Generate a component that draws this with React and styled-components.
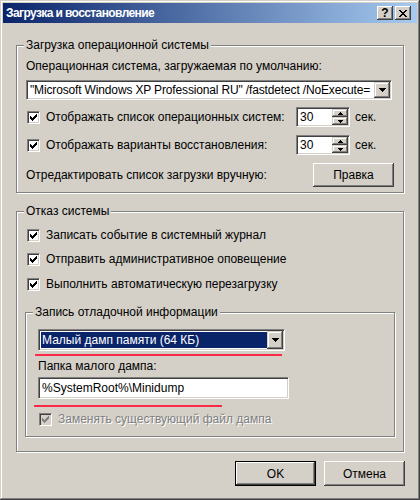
import styled, { createGlobalStyle } from 'styled-components';

const GlobalStyle = createGlobalStyle`
  html, body { margin: 0; padding: 0; background: #d4d0c8; }
  body {
    font-family: "Liberation Sans", Arial, sans-serif;
    font-size: 12px;
    color: #000;
  }
  * { box-sizing: border-box; }
`;

const Window = styled.div`
  width: 420px;
  height: 500px;
  padding: 3px;
  background: #d4d0c8;
  display: flex;
  flex-direction: column;
  box-shadow: inset -1px -1px 0 #404040, inset 1px 1px 0 #d4d0c8,
    inset -2px -2px 0 #808080, inset 2px 2px 0 #fff;
`;

const TitleBar = styled.div`
  height: 20px;
  flex: none;
  display: flex;
  align-items: center;
  justify-content: space-between;
  padding: 0 6px 0 3px;
  background: linear-gradient(to right, #0a246a, #a6caf0);
`;

const TitleText = styled.span`
  color: #fff;
  font-weight: bold;
  font-size: 12px;
  letter-spacing: -0.6px;
`;

const CaptionButtons = styled.div`
  display: flex;
  gap: 2px;
`;

const CaptionButton = styled.div`
  width: 16px;
  height: 14px;
  background: #d4d0c8;
  display: flex;
  align-items: center;
  justify-content: center;
  font-weight: bold;
  font-size: 12px;
  line-height: 1;
  box-shadow: inset -1px -1px 0 #404040, inset 1px 1px 0 #fff,
    inset -2px -2px 0 #808080, inset 2px 2px 0 #d4d0c8;
`;

const Body = styled.div`
  flex: 1;
  display: flex;
  flex-direction: column;
  padding: 22px 13px 0 13px;
`;

const Group = styled.div`
  position: relative;
  display: flex;
  flex-direction: column;
  border: 1px solid #808080;
  box-shadow: 1px 1px 0 #fff, inset 1px 1px 0 #fff;
  margin: ${(p) => p.$margin || '0'};
  padding: ${(p) => p.$pad};
`;

const Legend = styled.span`
  position: absolute;
  top: -8px;
  left: 7px;
  padding: 0 2px;
  line-height: 15px;
  background: #d4d0c8;
`;

const Label = styled.div`
  height: 16px;
  line-height: 16px;
  white-space: nowrap;
  margin-top: ${(p) => p.$mt || 0}px;
  color: ${(p) => (p.$disabled ? '#808080' : '#000')};
  text-shadow: ${(p) => (p.$disabled ? '1px 1px 0 #fff' : 'none')};
`;

const Sunken = styled.div`
  display: flex;
  align-items: stretch;
  height: ${(p) => p.$h || 20}px;
  width: ${(p) => (p.$w ? `${p.$w}px` : '100%')};
  margin-top: ${(p) => p.$mt || 0}px;
  background: #fff;
  border-top: 1px solid #808080;
  border-left: 1px solid #808080;
  border-right: 1px solid #fff;
  border-bottom: 1px solid #fff;
  box-shadow: inset 1px 1px 0 #404040, inset -1px -1px 0 #d4d0c8;
  padding: 2px;
`;

const FieldText = styled.div`
  flex: 1;
  min-width: 0;
  overflow: hidden;
  white-space: nowrap;
  line-height: ${(p) => p.$lh || 14}px;
  letter-spacing: ${(p) => p.$ls || 0}px;
  padding-left: 1px;
  background: ${(p) => (p.$selected ? '#0a246a' : 'transparent')};
  color: ${(p) => (p.$selected ? '#fff' : '#000')};
`;

const DropButton = styled.div`
  width: 16px;
  flex: none;
  margin: -1px -1px -1px 0;
  background: #d4d0c8;
  display: flex;
  align-items: center;
  justify-content: center;
  box-shadow: inset -1px -1px 0 #404040, inset 1px 1px 0 #d4d0c8,
    inset -2px -2px 0 #808080, inset 2px 2px 0 #fff;
`;

const SpinBox = styled.div`
  display: flex;
  flex-direction: column;
  width: 16px;
  flex: none;
  margin: -1px -1px -1px 0;
`;

const SpinHalf = styled.div`
  flex: 1;
  background: #d4d0c8;
  display: flex;
  align-items: center;
  justify-content: center;
  box-shadow: inset -1px -1px 0 #404040, inset 1px 1px 0 #d4d0c8,
    inset -2px -2px 0 #808080, inset 2px 2px 0 #fff;
`;

const CheckRow = styled.div`
  display: flex;
  align-items: center;
  min-width: 0;
  height: 16px;
  margin-top: ${(p) => p.$mt || 0}px;
  margin-left: ${(p) => p.$ml || 0}px;
`;

const Box = styled.span`
  width: 13px;
  height: 13px;
  flex: none;
  margin-right: 6px;
  display: flex;
  align-items: center;
  justify-content: center;
  background: ${(p) => (p.$disabled ? '#d4d0c8' : '#fff')};
  border-top: 1px solid #808080;
  border-left: 1px solid #808080;
  border-right: 1px solid #fff;
  border-bottom: 1px solid #fff;
  box-shadow: inset 1px 1px 0 #404040, inset -1px -1px 0 #d4d0c8;
`;

const TimeRow = styled.div`
  display: grid;
  grid-template-columns: minmax(0, 1fr) 54px 42px;
  align-items: center;
  margin-top: ${(p) => p.$mt || 0}px;
`;

const Unit = styled.span`
  padding-left: 5px;
`;

const EditRow = styled.div`
  display: flex;
  align-items: center;
  justify-content: space-between;
  margin-top: ${(p) => p.$mt || 0}px;
  margin-right: -2px;
`;

const Button = styled.div`
  width: 81px;
  height: ${(p) => p.$h || 24}px;
  display: flex;
  align-items: center;
  justify-content: center;
  background: #d4d0c8;
  border: ${(p) => (p.$default ? '1px solid #000' : 'none')};
  box-shadow: inset -1px -1px 0 #404040, inset 1px 1px 0 #fff,
    inset -2px -2px 0 #808080, inset 2px 2px 0 #d4d0c8;
`;

const Marker = styled.div`
  height: 2px;
  width: ${(p) => p.$w}px;
  margin-top: ${(p) => p.$mt}px;
  margin-left: ${(p) => p.$ml}px;
  background: #ff2a48;
`;

const Footer = styled.div`
  display: flex;
  justify-content: flex-end;
  gap: 8px;
  margin-top: 9px;
  margin-right: -1px;
`;

const Check = ({ color = '#000' }) => (
  <svg width="7" height="7" viewBox="0 0 7 7" shapeRendering="crispEdges">
    <path
      fill={color}
      d="M6 0h1v1h-1zM5 1h2v1h-2zM0 2h1v1h-1zM4 2h3v1h-3zM0 3h2v1h-2zM3 3h3v1h-3zM0 4h5v1h-5zM1 5h3v1h-3zM2 6h1v1h-1z"
    />
  </svg>
);

const DownArrow = () => (
  <svg width="7" height="4" viewBox="0 0 7 4" shapeRendering="crispEdges">
    <path d="M0 0h7v1h-7zM1 1h5v1h-5zM2 2h3v1h-3zM3 3h1v1h-1z" fill="#000" />
  </svg>
);

const SmallArrow = ({ up }) => (
  <svg width="5" height="3" viewBox="0 0 5 3" shapeRendering="crispEdges">
    <path
      fill="#000"
      d={up ? 'M2 0h1v1h-1zM1 1h3v1h-3zM0 2h5v1h-5z' : 'M0 0h5v1h-5zM1 1h3v1h-3zM2 2h1v1h-1z'}
    />
  </svg>
);

const CloseGlyph = () => (
  <svg width="8" height="7" viewBox="0 0 8 7" shapeRendering="crispEdges">
    <path
      fill="#000"
      d="M0 0h2v1h-2zM6 0h2v1h-2zM1 1h2v1h-2zM5 1h2v1h-2zM2 2h4v1h-4zM3 3h2v1h-2zM2 4h4v1h-4zM1 5h2v1h-2zM5 5h2v1h-2zM0 6h2v1h-2zM6 6h2v1h-2z"
    />
  </svg>
);

const CheckBox = ({ children, disabled, mt, ml }) => (
  <CheckRow $mt={mt} $ml={ml}>
    <Box $disabled={disabled}>
      <Check color={disabled ? '#808080' : '#000'} />
    </Box>
    <Label $disabled={disabled}>{children}</Label>
  </CheckRow>
);

const Spinner = ({ value }) => (
  <Sunken $h={20}>
    <FieldText $lh={14}>{value}</FieldText>
    <SpinBox>
      <SpinHalf>
        <SmallArrow up />
      </SpinHalf>
      <SpinHalf>
        <SmallArrow />
      </SpinHalf>
    </SpinBox>
  </Sunken>
);

const App = () => {
  return (
    <>
      <GlobalStyle />
      <Window>
        <TitleBar>
          <TitleText>Загрузка и восстановление</TitleText>
          <CaptionButtons>
            <CaptionButton>?</CaptionButton>
            <CaptionButton>
              <CloseGlyph />
            </CaptionButton>
          </CaptionButtons>
        </TitleBar>
        <Body>
          <Group $pad="12px 11px 5px 9px">
            <Legend>Загрузка операционной системы</Legend>
            <Label>Операционная система, загружаемая по умолчанию:</Label>
            <Sunken $mt={6} $h={20}>
              <FieldText $lh={14} $ls={-0.15}>
                "Microsoft Windows XP Professional RU" /fastdetect /NoExecute=
              </FieldText>
              <DropButton>
                <DownArrow />
              </DropButton>
            </Sunken>
            <TimeRow $mt={7}>
              <CheckBox ml={1}>Отображать список операционных систем:</CheckBox>
              <Spinner value="30" />
              <Unit>сек.</Unit>
            </TimeRow>
            <TimeRow $mt={8}>
              <CheckBox ml={1}>Отображать варианты восстановления:</CheckBox>
              <Spinner value="30" />
              <Unit>сек.</Unit>
            </TimeRow>
            <EditRow $mt={8}>
              <Label>Отредактировать список загрузки вручную:</Label>
              <Button>Правка</Button>
            </EditRow>
          </Group>

          <Group $margin="18px 0 0 0" $pad="15px 8px 14px 10px">
            <Legend>Отказ системы</Legend>
            <CheckBox>Записать событие в системный журнал</CheckBox>
            <CheckBox mt={8}>Отправить административное оповещение</CheckBox>
            <CheckBox mt={9}>Выполнить автоматическую перезагрузку</CheckBox>

            <Group $margin="20px 0 0 -2px" $pad="16px 12px 9px 12px">
              <Legend>Запись отладочной информации</Legend>
              <Sunken $w={247} $h={22}>
                <FieldText $selected $lh={16}>
                  Малый дамп памяти (64 КБ)
                </FieldText>
                <DropButton>
                  <DownArrow />
                </DropButton>
              </Sunken>
              <Marker $w={247} $mt={3} $ml={-3} />
              <Label $mt={2}>Папка малого дампа:</Label>
              <Sunken $w={251} $h={22} $mt={3}>
                <FieldText $lh={16}>%SystemRoot%\Minidump</FieldText>
              </Sunken>
              <Marker $w={188} $mt={6} $ml={-4} />
              <CheckBox disabled mt={4} ml={1}>
                Заменять существующий файл дампа
              </CheckBox>
            </Group>
          </Group>

          <Footer>
            <Button $default $h={25}>OK</Button>
            <Button $h={25}>Отмена</Button>
          </Footer>
        </Body>
      </Window>
    </>
  );
};

export default App;
